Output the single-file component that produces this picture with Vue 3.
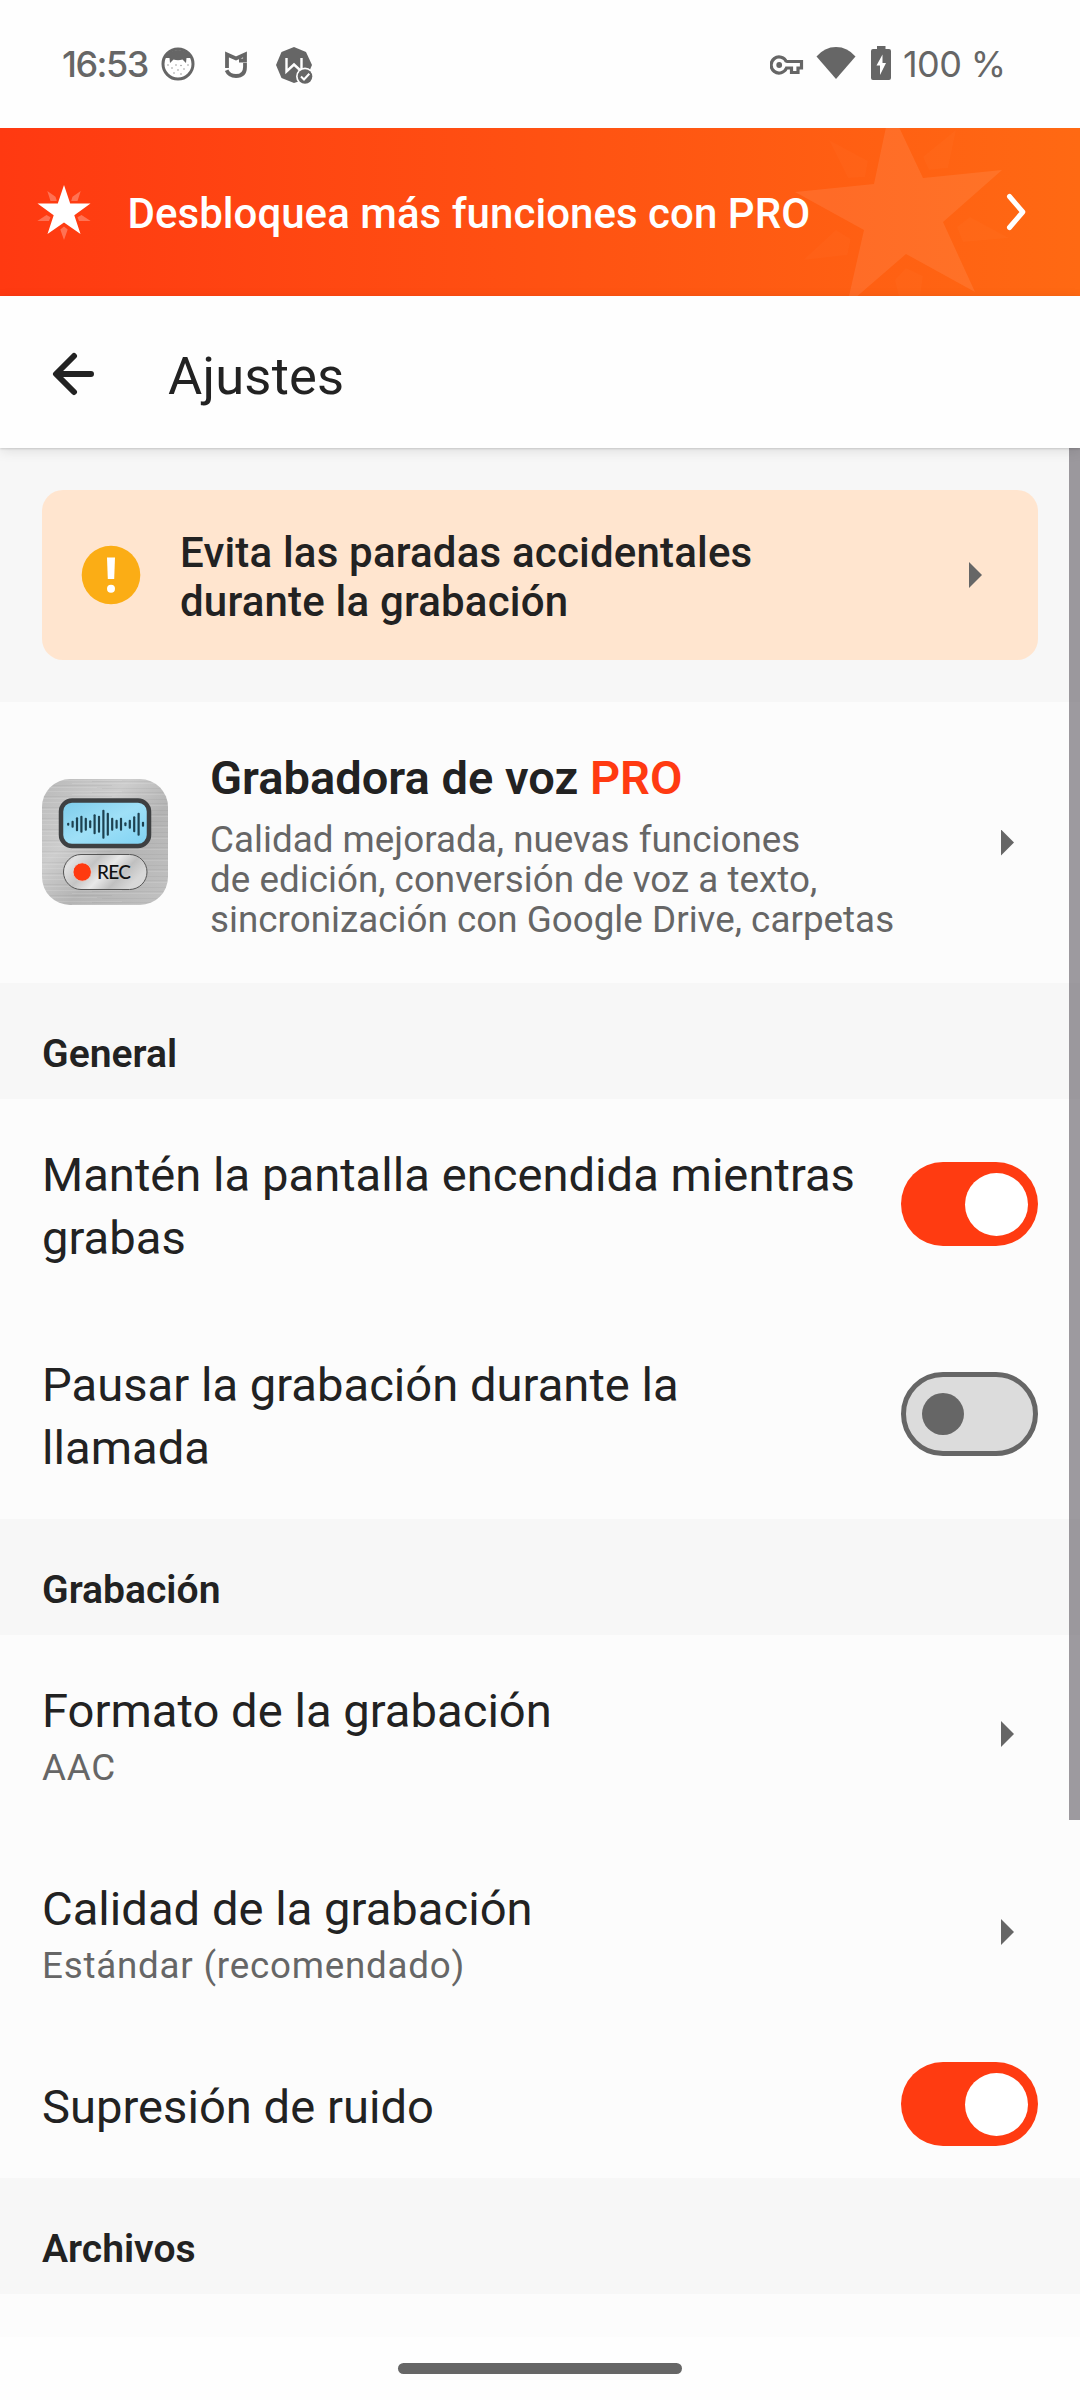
<script setup>
const bars = [1.5, 3.5, 7, 8.5, 6.5, 4, 10, 8.5, 14.5, 11.5, 6.5, 4.5, 6.5, 2, 4.5, 8, 11.5, 2.5].map((h, i) => ({
  x: 26.2 + i * 4.4,
  y: 45.3 - h,
  height: h * 2,
}))

const sections = [
  {
    title: 'General',
    rows: [
      { label: 'Mantén la pantalla encendida mientras\ngrabas', toggle: true, on: true, tall: true },
      { label: 'Pausar la grabación durante la\nllamada', toggle: true, on: false, tall: true },
    ],
  },
  {
    title: 'Grabación',
    rows: [
      { label: 'Formato de la grabación', value: 'AAC' },
      { label: 'Calidad de la grabación', value: 'Estándar (recomendado)' },
      { label: 'Supresión de ruido', toggle: true, on: true },
    ],
  },
  { title: 'Archivos', rows: [] },
]
</script>

<template>
  <div class="screen">
    <header class="status">
      <div class="status-left">
        <span class="clock">16:53</span>
        <svg class="i-cat" width="34" height="34" viewBox="0 0 34 34">
          <circle cx="17" cy="17" r="15" fill="#fff" stroke="#666" stroke-width="3" />
          <path d="M4 11 Q8 3 17 3 Q26 3 30 11 L25.5 11 L25 16 L21.5 12.5 Q17 14 12.5 12.5 L9 16 L8.500 11 Z" fill="#666" />
          <g fill="#999">
            <circle cx="7" cy="18" r=".8" /><circle cx="11" cy="21" r=".8" /><circle cx="15" cy="18" r=".8" />
            <circle cx="20" cy="18.500" r=".8" /><circle cx="23" cy="22" r=".8" /><circle cx="27" cy="18" r=".8" />
            <circle cx="17" cy="23" r=".8" /><circle cx="13" cy="26" r=".8" /><circle cx="20" cy="27" r=".8" />
          </g>
        </svg>
        <svg class="i-mi" width="24" height="28" viewBox="0 0 24 28" fill="none" stroke="#666" stroke-width="3.800">
          <path d="M3 18 V4.500 L12 8.500 L21 4.500 V10.500 H15" stroke-linejoin="miter" />
          <path d="M2.600 20.300 Q5 26 12 26 Q21 26 21 17 V13" />
        </svg>
        <svg class="i-w" width="38" height="38" viewBox="0 0 38 38">
          <path d="M19 1 L31 6 L37 19 L31 33 L19 37 L6.500 32 L1 19 L6.500 6 Z" fill="#666" />
          <path d="M11.500 12 V25.500 L19 18.500 L26.500 25.500 V12" fill="none" stroke="#fff" stroke-width="2.400" />
          <circle cx="30" cy="30.500" r="9" fill="#fff" />
          <circle cx="30" cy="30.500" r="7.300" fill="#666" />
          <path d="M26 30.500 L29 33.500 L34.300 27.800" fill="none" stroke="#fff" stroke-width="2" />
        </svg>
      </div>
      <div class="status-right">
        <svg class="i-key" width="34" height="22" viewBox="0 0 34 22">
          <path d="M16.500 8 A8 8 0 1 0 16.500 14 H21.500 V18.500 H28 V14 H31.500 V7.500 H16.300" fill="none" stroke="#666" stroke-width="3.200" />
          <circle cx="9.200" cy="11" r="2.900" fill="#666" />
        </svg>
        <svg class="i-wifi" width="40" height="34" viewBox="0 0 40 34">
          <path d="M20 33 L.5 10.500 Q8.500 1 20 1 Q31.500 1 39.500 10.500 Z" fill="#666" />
        </svg>
        <svg class="i-bat" width="20" height="34" viewBox="0 0 20 34">
          <path d="M6 0 H14.500 V3 H18 Q20 3 20 5 V32 Q20 34 18 34 H2 Q0 34 0 32 V5 Q0 3 2 3 H6 Z" fill="#666" />
          <path d="M11.500 8.500 L5.500 19.500 H9 V29 L15 17 H11.500 Z" fill="#fff" />
        </svg>
        <span class="percent">100 %</span>
      </div>
    </header>

    <section class="banner">
      <svg class="burst" width="220" height="168" viewBox="790 128 220 168" fill="#fff">
        <path opacity=".085" d="M890 108 L923 178 L1002 170 L943 222 L975 292 L906 254 L847 305 L864 230 L795 192 L874 184 Z" />
        <path opacity=".02" d="M829 140 L868 161 L865 177 L848 178 Z M956 130 L948 168 L929 170 L923 157 Z M1009 238 L970 217 L957 227 L963 242 Z M803.500 260 L836 230 L850.600 239 L847.500 255 Z M906 268 L895 280 L899 297 L920 297 L923 276 Z" />
      </svg>
      <svg class="star" width="54" height="56" viewBox="0 0 54 56" fill="#fff">
        <path d="M27 1 L33.200 19.500 H53.500 L37.300 31.300 L43.500 50 L27 38.500 L10.500 50 L16.700 31.300 L.5 19.500 H20.800 Z" />
        <path opacity=".28" d="M10.300 7 L18.500 12.800 L19.800 17 H13.500 Z M43.700 7 L35.500 12.800 L34.200 17 H40.500 Z M.3 37 L9.500 31 L13.500 33.200 L12 37 Z M53.700 37 L44.500 31 L40.500 33.200 L42 37 Z M27 56 L23.300 45.500 L27 42.500 L30.700 45.500 Z" />
      </svg>
      <span class="banner-text">Desbloquea más funciones con PRO</span>
      <svg class="chev" width="20" height="38" viewBox="0 0 20 38">
        <path d="M3.500 3.500 L16.800 19 L3.500 34.500" fill="none" stroke="#fff" stroke-width="5" stroke-linecap="round" stroke-linejoin="round" />
      </svg>
    </section>

    <nav class="appbar">
      <svg width="44" height="44" viewBox="0 0 44 44" fill="none" stroke="#222" stroke-width="6" stroke-linecap="round" stroke-linejoin="round">
        <path d="M22 4 L4 22 L22 40 M5 22 H39" />
      </svg>
      <h1>Ajustes</h1>
    </nav>

    <main class="content">
      <div class="scrollbar"></div>
      <div class="notice-wrap">
        <div class="notice">
          <svg width="60" height="60" viewBox="0 0 60 60">
            <circle cx="30" cy="30" r="29.300" fill="#fbad15" />
            <path d="M26 12.500 H34 L33.200 34 H26.800 Z" fill="#fff" />
            <circle cx="30" cy="43.700" r="4" fill="#fff" />
          </svg>
          <p>Evita las paradas accidentales<br />durante la grabación</p>
          <i class="tri"></i>
        </div>
      </div>

      <div class="pro">
        <svg class="app-icon" width="126" height="126" viewBox="0 0 126 126">
          <defs>
            <linearGradient id="metal" x1="0" y1="0" x2="1" y2="1">
              <stop offset="0" stop-color="#b9b9b9" /><stop offset=".35" stop-color="#cdcdcd" />
              <stop offset=".6" stop-color="#b4b4b4" /><stop offset="1" stop-color="#c2c2c2" />
            </linearGradient>
            <linearGradient id="lcd" x1="0" y1="0" x2="1" y2="1">
              <stop offset="0" stop-color="#7ccbea" /><stop offset=".5" stop-color="#9fe0f7" /><stop offset="1" stop-color="#7fd2f3" />
            </linearGradient>
            <linearGradient id="pill" x1="0" y1="0" x2="1" y2=".4">
              <stop offset="0" stop-color="#b5b5b5" /><stop offset=".15" stop-color="#e2e2e2" /><stop offset=".4" stop-color="#c4c4c4" />
              <stop offset=".6" stop-color="#e9e9e9" /><stop offset=".8" stop-color="#c0c0c0" /><stop offset="1" stop-color="#d8d8d8" />
            </linearGradient>
            <pattern id="brush" width="126" height="11" patternUnits="userSpaceOnUse">
              <path d="M0 1.500 H80 M30 4.500 H126 M0 8.500 H55" stroke="#fff" stroke-opacity=".12" />
              <path d="M50 2.500 H126 M0 6.500 H70 M60 9.500 H126" stroke="#000" stroke-opacity=".04" />
            </pattern>
          </defs>
          <rect width="126" height="126" rx="28" fill="url(#metal)" />
          <rect width="126" height="126" rx="28" fill="url(#brush)" />
          <rect x="19" y="21.500" width="88" height="45.500" rx="11" fill="url(#lcd)" stroke="#3e4042" stroke-width="4.500" />
          <rect v-for="b in bars" :key="b.x" :x="b.x - 1.100" :y="b.y" width="2.200" :height="b.height" rx="1" fill="#1d4150" />
          <rect x="21.500" y="75.500" width="83.500" height="35" rx="17.500" fill="url(#pill)" stroke="#555" stroke-width="1" />
          <circle cx="40.200" cy="93" r="9.200" fill="#ff3a10" stroke="#ddd" stroke-width=".8" />
          <text x="55" y="100" class="rec" textLength="34">REC</text>
        </svg>
        <div class="pro-body">
          <h2>Grabadora de voz <b>PRO</b></h2>
          <p>Calidad mejorada, nuevas funciones<br />de edición, conversión de voz a texto,<br />sincronización con Google Drive, carpetas</p>
        </div>
        <i class="tri"></i>
      </div>

      <section v-for="s in sections" :key="s.title">
        <h3>{{ s.title }}</h3>
        <div v-for="r in s.rows" :key="r.label" class="row" :class="{ tall: r.tall, two: r.value }">
          <div class="row-text">
            <div class="label">{{ r.label }}</div>
            <div v-if="r.value" class="value">{{ r.value }}</div>
          </div>
          <span v-if="r.toggle" class="switch" :class="{ on: r.on }"><span class="knob"></span></span>
          <i v-else class="tri"></i>
        </div>
      </section>
    </main>

    <footer class="gesture"><span></span></footer>
  </div>
</template>

<style>
body {
  margin: 0;
  background: #fff;
}
</style>

<style scoped>
* {
  box-sizing: border-box;
}
h1, h2, h3, p {
  margin: 0;
}
.screen {
  width: 1080px;
  height: 2400px;
  display: flex;
  flex-direction: column;
  overflow: hidden;
  background: #fefefe;
  color: #222;
  font-family: Roboto, sans-serif;
}
.status {
  height: 128px;
  flex: none;
  display: flex;
  justify-content: space-between;
  padding: 0 76px 0 62px;
  color: #666;
  font-family: Inter, sans-serif;
  font-size: 36px;
  line-height: 128px;
}
.status-left, .status-right {
  display: flex;
  align-items: center;
}
.clock {
  width: 99px;
  font-weight: 500;
  letter-spacing: -1.500px;
  white-space: nowrap;
}
.i-mi { margin-left: 29px; }
.i-w { margin: 2px 0 0 27px; }
.i-key { margin: 2px 12px 0 0; }
.i-wifi { margin: -2px 15px 0 0; }
.i-bat { margin: -2px 12px 0 0; }
.percent {
  width: 101px;
  font-weight: 400;
  letter-spacing: -.6px;
  white-space: nowrap;
}
.banner {
  position: relative;
  height: 168px;
  flex: none;
  display: flex;
  align-items: center;
  padding: 0 54px 0 36.500px;
  background: linear-gradient(90deg, #ff3911, #ff6913);
  color: #fff;
}
.burst {
  position: absolute;
  left: 790px;
  top: 0;
}
.star { position: relative; }
.banner-text {
  position: relative;
  margin-left: 37px;
  padding-top: 3px;
  flex: 1;
  font-size: 42px;
  font-weight: 500;
  line-height: 48px;
  letter-spacing: .04px;
  white-space: nowrap;
}
.chev { position: relative; }
.appbar {
  position: relative;
  z-index: 2;
  height: 152px;
  flex: none;
  display: flex;
  align-items: center;
  padding-left: 52px;
  background: #fefefe;
  box-shadow: 0 1px 2px rgba(0, 0, 0, .14), 0 3px 12px rgba(0, 0, 0, .1);
}
.appbar svg { margin-top: 3px; }
.appbar h1 {
  margin-left: 72px;
  padding-top: 8px;
  font-size: 52.500px;
  font-weight: 400;
  line-height: 60px;
  letter-spacing: .2px;
}
.content {
  position: relative;
  height: 1889px;
  flex: none;
  overflow: hidden;
  background: #fcfcfc;
}
.scrollbar {
  position: absolute;
  z-index: 1;
  right: 0;
  top: 0;
  width: 11px;
  height: 1372px;
  background: rgba(60, 54, 64, .49);
}
.notice-wrap {
  padding: 42px;
  background: #f7f7f7;
}
.notice {
  height: 170px;
  display: flex;
  align-items: center;
  padding: 0 56px 0 39px;
  border-radius: 21px;
  background: #ffe5cf;
}
.notice p {
  flex: 1;
  margin-left: 39px;
  padding-top: 4px;
  font-size: 42px;
  font-weight: 500;
  line-height: 49px;
  letter-spacing: .19px;
  white-space: nowrap;
}
.tri {
  flex: none;
  width: 13px;
  height: 26px;
  background: #666;
  clip-path: polygon(0 0, 100% 50%, 0 100%);
}
.pro {
  height: 281px;
  display: flex;
  align-items: center;
  padding: 0 66px 0 42px;
}
.app-icon { margin-top: -1.500px; }
.pro-body {
  flex: 1;
  align-self: flex-start;
  margin-left: 42px;
  padding-top: 48px;
  white-space: nowrap;
}
.pro-body h2 {
  font-size: 47.050px;
  font-weight: 600;
  line-height: 56px;
}
.pro-body b {
  font-weight: inherit;
  color: #ff3a11;
}
.pro-body p {
  margin-top: 14.400px;
  font-size: 36.750px;
  line-height: 40px;
  letter-spacing: .03px;
  color: #666;
}
.rec {
  font-family: Lato, sans-serif;
  font-size: 19px;
  font-weight: 500;
  fill: #111;
}
h3 {
  height: 116px;
  padding: 51px 42px 0;
  background: #f7f7f7;
  font-size: 39.100px;
  font-weight: 600;
  line-height: 41px;
}
.row {
  height: 147px;
  display: flex;
  align-items: center;
  padding: 0 42px;
}
.row.tall { height: 210px; }
.row.two {
  height: 198px;
  padding-right: 66px;
}
.row-text {
  flex: 1;
  padding-top: 5px;
}
.two .row-text {
  align-self: flex-start;
  padding-top: 45px;
}
.label {
  font-size: 47.150px;
  line-height: 63px;
  letter-spacing: .02px;
  white-space: pre;
}
.value {
  margin-top: 3px;
  font-size: 36.750px;
  line-height: 43px;
  letter-spacing: .78px;
  color: #666;
}
.switch {
  flex: none;
  width: 137px;
  height: 84px;
  display: flex;
  align-items: center;
  padding-left: 16px;
  border: 5px solid #666;
  border-radius: 42px;
  background: #dcdcdc;
}
.row:not(.tall) .switch { margin-top: -1px; }
.knob {
  width: 42px;
  height: 42px;
  border-radius: 50%;
  background: #666;
}
.switch.on {
  justify-content: flex-end;
  padding-right: 10.500px;
  border: 0;
  background: #ff3b11;
}
.switch.on .knob {
  width: 63px;
  height: 63px;
  background: #fff;
}
.gesture {
  flex: 1;
  display: flex;
  justify-content: center;
  padding-top: 26px;
  background: #fefefe;
}
.gesture span {
  width: 284px;
  height: 11px;
  border-radius: 5.500px;
  background: #666;
}
</style>
